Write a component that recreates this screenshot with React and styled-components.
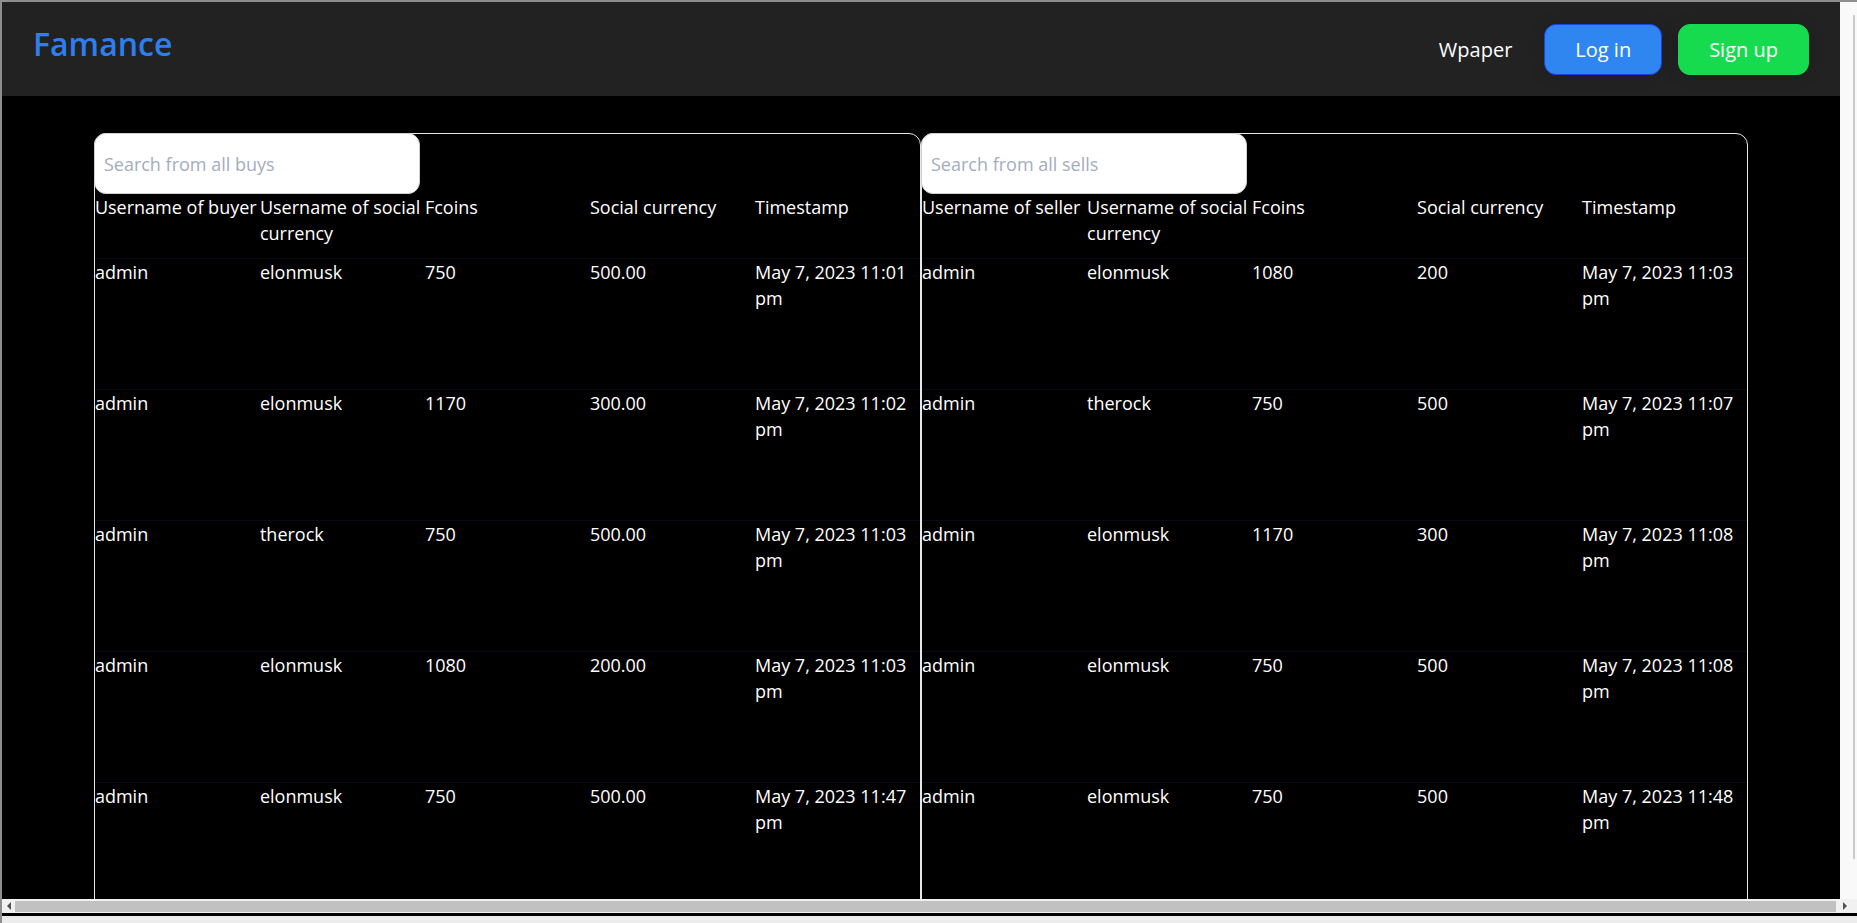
import React from "react";
import styled, { createGlobalStyle } from "styled-components";

const GlobalStyle = createGlobalStyle`
  html, body { margin: 0; padding: 0; background: #ececec; }
  body { font-family: "Open Sans", "Liberation Sans", sans-serif; }
  * { box-sizing: border-box; }
`;

const Frame = styled.div`
  width: 1857px;
  height: 923px;
  overflow: hidden;
  border-top: 2px solid #8e8e8e;
  border-left: 2px solid #8e8e8e;
  background: #ececec;
  display: grid;
  grid-template-columns: 1838px 17px;
  grid-template-rows: 897px 14px 3px 1fr;
`;

const Viewport = styled.div`
  grid-column: 1;
  grid-row: 1;
  background: #000;
  overflow: hidden;
`;

const VScroll = styled.div`
  grid-column: 2;
  grid-row: 1;
  background: #f9f9f9;
  display: flex;
  justify-content: flex-end;
  padding: 13px 2px 40px 0;
`;

const VThumb = styled.div`
  width: 2px;
  background: #cbcbcb;
`;

const HScroll = styled.div`
  grid-column: 1 / -1;
  grid-row: 2;
  background: #f1f1f1;
  display: flex;
  align-items: center;
  padding-right: 4px;
`;

const ArrowBtn = styled.div`
  width: ${(p) => p.$w}px;
  height: 100%;
  display: flex;
  align-items: center;
  justify-content: center;
  &::before {
    content: "";
    width: 0;
    height: 0;
    border-top: 4px solid transparent;
    border-bottom: 4px solid transparent;
    ${(p) =>
      p.$dir === "left"
        ? "border-right: 4px solid #505050;"
        : "border-left: 4px solid #505050;"}
  }
`;

const HThumb = styled.div`
  flex: 1;
  height: 11px;
  background: #c1c1c1;
`;

const Tail = styled.div`
  grid-column: 1 / -1;
  grid-row: 3;
  background: #000;
`;

const Header = styled.header`
  height: 94px;
  background: #222222;
  display: flex;
  align-items: center;
  justify-content: space-between;
  padding: 0 31px 0 31px;
`;

const Logo = styled.div`
  font-size: 32px;
  font-weight: 600;
  color: #2d7ff0;
  padding-bottom: 11px;
`;

const Nav = styled.nav`
  display: flex;
  align-items: center;
`;

const NavLink = styled.a`
  color: #fff;
  font-size: 20px;
  text-decoration: none;
  margin-right: 32px;
`;

const Button = styled.button`
  font-family: inherit;
  font-size: 20px;
  line-height: 27px;
  color: #fff;
  padding: 11px 30px;
  border-radius: 12px;
  border: 1px solid ${(p) => p.$border};
  background: ${(p) => p.$bg};
  box-shadow: 0 0 18px rgba(0, 0, 0, 0.12);
  margin-left: ${(p) => p.$ml || 0}px;
  cursor: pointer;
`;

const Main = styled.main`
  width: 90%;
  margin: 37px auto 0;
  display: flex;
`;

const Panel = styled.section`
  flex: 1;
  min-width: 0;
  border: 1px solid #e6e6e6;
  border-radius: 12px;
`;

const SearchInput = styled.input`
  display: block;
  width: 326px;
  height: 61px;
  margin: -1px 0 0 -1px;
  border: 1px solid #d0d0d0;
  border-radius: 12px;
  padding: 0 9px;
  font-family: inherit;
  font-size: 18px;
  background: #fff;
  outline: none;
  &::placeholder { color: #a3adbf; }
`;

const Table = styled.table`
  width: 100%;
  table-layout: fixed;
  border-collapse: collapse;
  color: #fff;
  font-size: 18px;
  line-height: 26px;
`;

const Th = styled.th`
  text-align: left;
  font-weight: 400;
  vertical-align: top;
  padding: 0 0 12px;
`;

const Td = styled.td`
  vertical-align: top;
  height: 131px;
  padding: 0;
  border-top: 1px solid #0a0a14;
`;

const buys = [
  ["admin", "elonmusk", "750", "500.00", "May 7, 2023 11:01 pm"],
  ["admin", "elonmusk", "1170", "300.00", "May 7, 2023 11:02 pm"],
  ["admin", "therock", "750", "500.00", "May 7, 2023 11:03 pm"],
  ["admin", "elonmusk", "1080", "200.00", "May 7, 2023 11:03 pm"],
  ["admin", "elonmusk", "750", "500.00", "May 7, 2023 11:47 pm"],
];

const sells = [
  ["admin", "elonmusk", "1080", "200", "May 7, 2023 11:03 pm"],
  ["admin", "therock", "750", "500", "May 7, 2023 11:07 pm"],
  ["admin", "elonmusk", "1170", "300", "May 7, 2023 11:08 pm"],
  ["admin", "elonmusk", "750", "500", "May 7, 2023 11:08 pm"],
  ["admin", "elonmusk", "750", "500", "May 7, 2023 11:48 pm"],
];

function TradePanel({ placeholder, who, rows }) {
  return (
    <Panel>
      <SearchInput placeholder={placeholder} />
      <Table>
        <thead>
          <tr>
            <Th>{`Username of ${who}`}</Th>
            <Th>Username of social currency</Th>
            <Th>Fcoins</Th>
            <Th>Social currency</Th>
            <Th>Timestamp</Th>
          </tr>
        </thead>
        <tbody>
          {rows.map((r, i) => (
            <tr key={i}>
              {r.map((c, j) => (
                <Td key={j}>{c}</Td>
              ))}
            </tr>
          ))}
        </tbody>
      </Table>
    </Panel>
  );
}

export default function App() {
  return (
    <>
      <GlobalStyle />
      <Frame>
        <Viewport>
          <Header>
            <Logo>Famance</Logo>
            <Nav>
              <NavLink href="#">Wpaper</NavLink>
              <Button $bg="#2f86f0" $border="#1d3fe6">Log in</Button>
              <Button $bg="#17db4f" $border="#17db4f" $ml={16}>Sign up</Button>
            </Nav>
          </Header>
          <Main>
            <TradePanel placeholder="Search from all buys" who="buyer" rows={buys} />
            <TradePanel placeholder="Search from all sells" who="seller" rows={sells} />
          </Main>
        </Viewport>
        <VScroll>
          <VThumb />
        </VScroll>
        <HScroll>
          <ArrowBtn $w={13} $dir="left" />
          <HThumb />
          <ArrowBtn $w={17} $dir="right" />
        </HScroll>
        <Tail />
      </Frame>
    </>
  );
}
